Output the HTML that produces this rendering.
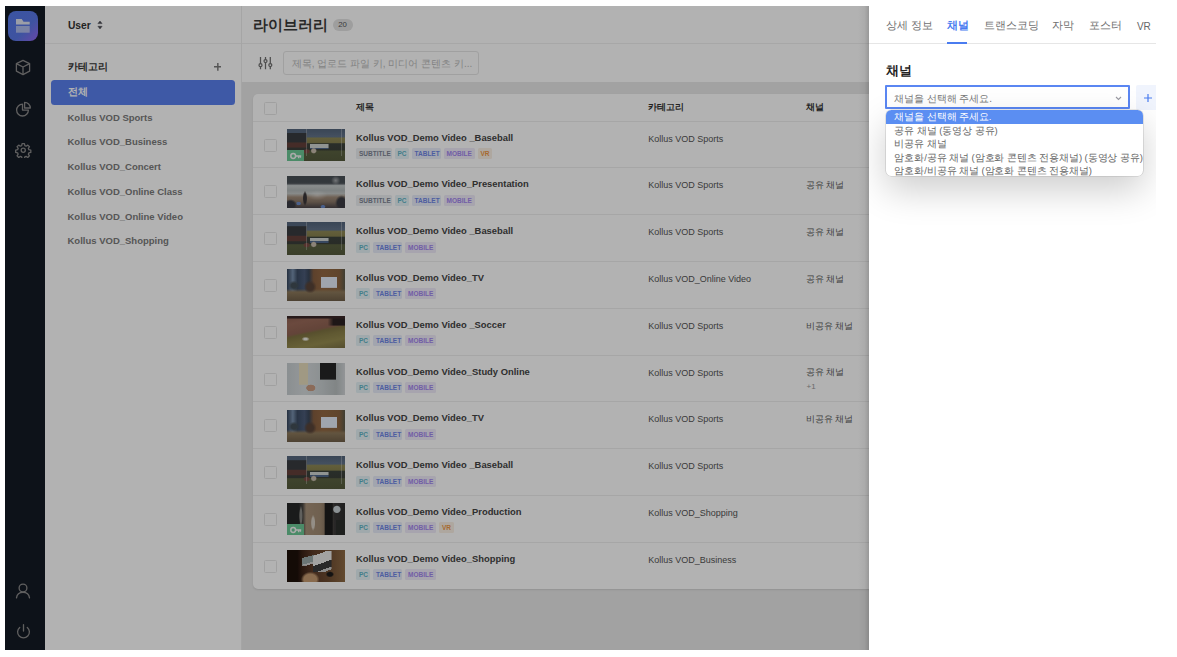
<!DOCTYPE html>
<html><head><meta charset="utf-8">
<style>
*{box-sizing:border-box;margin:0;padding:0}
html,body{width:1177px;height:657px;overflow:hidden;background:#fff;font-family:"Liberation Sans",sans-serif;position:relative}
.a{position:absolute;white-space:nowrap}
#side{position:absolute;left:5px;top:6px;width:40px;height:644px;background:#141a24}
#logo{position:absolute;left:3px;top:4.6px;width:30px;height:30.5px;border-radius:8px;background:linear-gradient(135deg,#5479e8 0%,#5a78e6 60%,#9466f0 100%)}
.ico{position:absolute}
#cat{position:absolute;left:45px;top:6px;width:197px;height:644px;background:#fff;border-right:1px solid #ececec}
#mainhd{position:absolute;left:242px;top:6px;width:700px;height:37.5px;background:#fff;border-bottom:1px solid #efefef}
#search{position:absolute;left:242px;top:44.5px;width:700px;height:37.5px;background:#fff}
#gray{position:absolute;left:242px;top:82px;width:700px;height:568px;background:#e8e8e8}
#card{position:absolute;left:253px;top:93.7px;width:700px;height:495px;background:#fff;border-radius:5px;box-shadow:0 1px 2px rgba(0,0,0,.1)}
.row{position:absolute;left:253px;width:700px;height:46.8px}
.cb{position:absolute;left:10.6px;width:13px;height:13px;border:1px solid #e6e6e6;border-radius:1.5px;background:#fff}
.th{position:absolute;left:34px;top:7.2px;width:58px;height:32.3px;overflow:hidden}
.key{position:absolute;left:0;bottom:0;width:17px;height:11px;background:#6cc895;display:flex;align-items:center;justify-content:center}
.ttl{position:absolute;left:103px;top:9px;font-size:9.4px;font-weight:700;color:#444;white-space:nowrap;line-height:14px}
.tags{position:absolute;left:103px;top:26.4px;height:11px;display:flex;gap:3px;white-space:nowrap}
.tg{display:inline-block;height:11px;line-height:11px;padding:0 3px;font-size:6.5px;font-weight:700;border-radius:1.5px}
.tg.SUBTITLE{background:#eceff3;color:#7d8493;width:35.5px}
.tg.PC{background:#e6f3f6;color:#5fb4c6;width:14px}
.tg.TABLET{background:#e9edfa;color:#6f86e6;width:29px}
.tg.MOBILE{background:#efebfa;color:#a386ee;width:31px}
.tg.VR{background:#faefe4;color:#ee9846;width:14.7px}
.ccat{position:absolute;left:395.2px;top:11px;font-size:9px;color:#555;line-height:13px;white-space:nowrap}
.cch{position:absolute;left:552.6px;top:9.8px;font-size:8.8px;color:#555;line-height:14px;white-space:nowrap}
#overlay{position:absolute;left:5px;top:6px;width:864px;height:644px;background:rgba(0,0,0,0.3)}
#panel{position:absolute;left:869px;top:0;width:287px;height:657px;background:#fff;overflow:hidden}
#pshadow{position:absolute;left:858px;top:6px;width:11px;height:644px;background:linear-gradient(90deg,rgba(0,0,0,0) 0%,rgba(0,0,0,.04) 60%,rgba(0,0,0,.15) 100%)}
.tab{position:absolute;top:18.2px;font-size:11px;color:#707070;line-height:14px;white-space:nowrap}
#dd{position:absolute;left:17px;top:110.3px;width:256.8px;height:66.1px;background:#fff;border-radius:5.5px;box-shadow:0 0 0 0.6px rgba(0,0,0,0.16),0 14px 36px rgba(0,0,0,0.2);overflow:hidden}
.opt{position:absolute;left:0;width:100%;height:13.5px;line-height:13.5px;padding-left:8.4px;font-size:9.5px;letter-spacing:-0.08px;color:#666;white-space:nowrap}
.th.baseball{background:
 linear-gradient(90deg,transparent 0 33%,rgba(235,235,235,.3) 33% 35%,transparent 35% 93%,rgba(235,235,235,.3) 93% 95%,transparent 95%) 0 0/100% 85% no-repeat,
 radial-gradient(ellipse 8% 10% at 34% 70%,#7a4a42 50%,transparent 80%),
 radial-gradient(ellipse 7% 12% at 46% 68%,#c8bcac 50%,transparent 80%),
 linear-gradient(180deg,transparent 0 47%,#cfd4d2 47% 58%,#50688a 58% 63%,transparent 63%) 58% 0/32% 100% no-repeat,
 linear-gradient(180deg,#56687f 0 12%,#383c40 14% 40%,#64403a 44% 56%,#3a3e3a 60% 68%,transparent 68%) 0 0/34% 100% no-repeat,
 linear-gradient(180deg,#53647a 0%,#62738a 24%,#8e8854 29%,#86814f 43%,#3c423c 46%,#3a3f39 65%,#5a6140 69%,#545a3c 100%)}
.th.pres{background:
 radial-gradient(ellipse 10% 18% at 84% 14%,rgba(255,255,255,.5),transparent 80%),
 radial-gradient(ellipse 14% 22% at 6% 90%,#3a3c44 50%,transparent 80%),
 radial-gradient(ellipse 14% 30% at 94% 84%,#3c3c42 50%,transparent 80%),
 radial-gradient(ellipse 5% 30% at 31% 70%,#3a3638 50%,transparent 80%),
 radial-gradient(ellipse 6% 8% at 62% 96%,#6a8ac8 50%,transparent 80%),
 radial-gradient(ellipse 6% 8% at 20% 86%,#6a8ac8 50%,transparent 80%),
 radial-gradient(ellipse 22% 20% at 52% 60%,rgba(255,255,255,.35),transparent 80%),
 linear-gradient(180deg,#4a5157 0 20%,#5a6066 24%,#c6cccc 30%,#b4baba 45%,#c2c6c4 55%,#a08c7a 66%,#8a7868 80%,#4a4448 100%)}
.th.tv{background:
 linear-gradient(90deg,transparent 0 58%,#e6ecf8 58% 86%,transparent 86%) 0 36%/100% 34% no-repeat,
 radial-gradient(ellipse 6% 11% at 66% 42%,#3e5ea0 50%,transparent 80%),
 radial-gradient(ellipse 5% 9% at 77% 40%,#3a4a6a 50%,transparent 80%),
 radial-gradient(ellipse 14% 26% at 40% 56%,#5a4438 40%,transparent 80%),
 radial-gradient(ellipse 12% 20% at 12% 52%,#445058 40%,transparent 80%),
 linear-gradient(180deg,transparent 0 62%,#8e7a5c 72%,#6e5e48 100%),
 linear-gradient(90deg,#34445a 0%,#7890ad 10%,#3c4c64 18%,#4c5c78 30%,#3a4658 38%,#865e40 46%,#946842 62%,#8a6440 90%,#5a5848 100%)}
.th.soccer{background:
 radial-gradient(ellipse 9% 9% at 32% 72%,rgba(255,255,255,.85) 30%,transparent 80%),
 linear-gradient(180deg,#3a2828 0 6%,transparent 10%),
 linear-gradient(90deg,transparent 0 70%,#2c2222 80%) 0 0/100% 30% no-repeat,
 linear-gradient(168deg,#8a5e50 0%,#9a6a5a 20%,#8e6252 44%,#7e7242 50%,#8a8048 62%,#968c50 78%,#7a7044 100%)}
.th.study{background:
 linear-gradient(90deg,transparent 0 57%,#262626 57% 84%,transparent 84%) 0 0/100% 52% no-repeat,
 radial-gradient(ellipse 12% 16% at 41% 78%,#c89a80 60%,transparent 70%),
 linear-gradient(90deg,transparent 0 20%,#e6dcbc 20% 37%,transparent 37%) 0 0/100% 68% no-repeat,
 linear-gradient(90deg,#c7cdd0 0%,#d5dadc 30%,#c9cfd1 60%,#b9bfc0 85%,#d2d6d8 100%)}
.th.prod{background:
 radial-gradient(ellipse 9% 16% at 86% 20%,#c8d0d4 60%,transparent 80%),
 linear-gradient(90deg,transparent 0 64%,#1e1e1e 66% 78%,transparent 80%),
 radial-gradient(ellipse 5% 32% at 45% 62%,#d4ccc0 50%,transparent 80%),
 radial-gradient(ellipse 4% 40% at 24% 40%,#8a8a86 50%,transparent 80%),
 linear-gradient(180deg,transparent 0 52%,#2c2e2c 52%) 100% 0/16% 100% no-repeat,
 linear-gradient(90deg,#262828 0 20%,#4a4844 27%,#a8927a 33%,#a08a72 58%,#927e68 64%,#3a3838 82%,#2e2e2e 100%)}
.th.shop{background:
 linear-gradient(160deg,transparent 0 18%,#e8e8e8 18% 55%,#3a3a3c 55% 80%,#c8c8c8 80% 90%,transparent 90%) 66% 12%/32% 66% no-repeat,
 linear-gradient(165deg,transparent 0 22%,#9aa8a8 22% 68%,#d0d0d0 68% 82%,transparent 82%) 33% 22%/22% 34% no-repeat,
 radial-gradient(ellipse 20% 30% at 40% 92%,#c49a70 55%,transparent 80%),
 radial-gradient(ellipse 9% 12% at 74% 76%,#1c1a1a 50%,transparent 80%),
 linear-gradient(90deg,#1e100a 0 18%,#3a2216 26%,#5e3c2a 45%,#6e4c32 70%,#8e6a44 100%)}

</style></head>
<body>
<div id="side">
  <div id="logo">
    <svg class="ico" style="left:8.3px;top:8.6px" width="14" height="14" viewBox="0 0 14 14">
      <path d="M0 0H5.7L7.5 2.7H13.7V5.5H0Z" fill="#e7e9f0" opacity="0.95"/>
      <rect x="0" y="7" width="13.7" height="6.7" fill="#e7e9f0" opacity="0.6"/>
    </svg>
  </div>
  <svg class="ico" style="left:10px;top:53px" width="16" height="17" viewBox="0 0 16 17" fill="none" stroke="#8a8a8a" stroke-width="1.3" stroke-linejoin="round">
    <path d="M8 1.3L14.6 4.6V12.2L8 15.6L1.4 12.2V4.6Z"/><path d="M1.4 4.6L8 8L14.6 4.6M8 8V15.6"/>
  </svg>
  <svg class="ico" style="left:10px;top:94px" width="17" height="18" viewBox="15 100 17 18" fill="none" stroke="#8a8a8a" stroke-width="1.3" stroke-linejoin="round">
    <path d="M22.5 104.2A5.9 5.9 0 1 0 28.4 110.1H22.5Z"/><path d="M24.6 102.3V108H30.3A5.7 5.7 0 0 0 24.6 102.3Z"/>
  </svg>
  <svg class="ico" style="left:10.3px;top:135.8px" width="16.5" height="16.5" viewBox="0 0 24 24" fill="none" stroke="#8a8a8a" stroke-width="1.9" stroke-linejoin="round">
    <circle cx="12" cy="12" r="3"/><path d="M10.3 2.5h3.4l.6 2.8 1.9.8 2.4-1.6 2.4 2.4-1.6 2.4.8 1.9 2.8.6v3.4l-2.8.6-.8 1.9 1.6 2.4-2.4 2.4-2.4-1.6-1.9.8-.6 2.8h-3.4l-.6-2.8-1.9-.8-2.4 1.6-2.4-2.4 1.6-2.4-.8-1.9-2.8-.6v-3.4l2.8-.6.8-1.9-1.6-2.4 2.4-2.4 2.4 1.6 1.9-.8z"/>
  </svg>
  <svg class="ico" style="left:10.15px;top:577px" width="16" height="17" viewBox="0 0 16 17" fill="none" stroke="#8a8a8a" stroke-width="1.3" stroke-linecap="round">
    <circle cx="8" cy="5" r="3.9"/><path d="M1.5 14.8C2 11.2 4.8 9.4 8 9.4S14 11.2 14.5 14.8"/>
  </svg>
  <svg class="ico" style="left:10.85px;top:618.2px" width="15" height="16" viewBox="0 0 15 16" fill="none" stroke="#8a8a8a" stroke-width="1.3" stroke-linecap="round">
    <path d="M3.71 3.48A5.9 5.9 0 1 0 11.29 3.48"/><path d="M7.5 0.75V7"/>
  </svg>
</div>
<div id="cat">
  <div class="a" style="left:0;top:0;width:196px;height:38px;border-bottom:1px solid #efefef"></div>
  <div class="a" style="left:22.9px;top:12px;font-size:10.3px;font-weight:700;color:#333;line-height:16px">User</div>
  <svg class="ico" style="left:51.5px;top:14px" width="6" height="10" viewBox="0 0 6 10" fill="#4a4a52" stroke="#4a4a52" stroke-width="0.5" stroke-linejoin="round"><path d="M0.9 3.6L3 1L5.1 3.6Z"/><path d="M0.9 6.3L3 8.9L5.1 6.3Z"/></svg>
  <div class="a" style="left:22.9px;top:53.6px;font-size:9.9px;font-weight:700;color:#333;line-height:14px">카테고리</div>
  <svg class="ico" style="left:168.7px;top:57.2px" width="7.7" height="7.7" viewBox="0 0 9 9" stroke="#7a7a7a" stroke-width="1.7"><path d="M4.5 0V9M0 4.5H9"/></svg>
  <div class="a" style="left:6px;top:73.5px;width:184.3px;height:25px;background:#5a80ee;border-radius:3.5px"></div>
  <div class="a" style="left:22.6px;top:78.6px;font-size:9.9px;font-weight:700;color:#fff;line-height:14px">전체</div>
  <div class="a" style="left:22.5px;top:104.5px;font-size:9.5px;font-weight:700;color:#7b7b7b;line-height:14px">Kollus VOD Sports</div>
  <div class="a" style="left:22.5px;top:129.4px;font-size:9.5px;font-weight:700;color:#7b7b7b;line-height:14px">Kollus VOD_Business</div>
  <div class="a" style="left:22.5px;top:154.2px;font-size:9.5px;font-weight:700;color:#7b7b7b;line-height:14px">Kollus VOD_Concert</div>
  <div class="a" style="left:22.5px;top:179px;font-size:9.5px;font-weight:700;color:#7b7b7b;line-height:14px">Kollus VOD_Online Class</div>
  <div class="a" style="left:22.5px;top:203.8px;font-size:9.5px;font-weight:700;color:#7b7b7b;line-height:14px">Kollus VOD_Online Video</div>
  <div class="a" style="left:22.5px;top:228.4px;font-size:9.5px;font-weight:700;color:#7b7b7b;line-height:14px">Kollus VOD_Shopping</div>
</div>
<div id="mainhd">
  <div class="a" style="left:11px;top:10px;font-size:14.5px;font-weight:700;color:#3a3a3a;line-height:18px">라이브러리</div>
  <div class="a" style="left:90.5px;top:13px;width:20px;height:12.2px;border-radius:6px;background:#e2e2e2;font-size:7.8px;color:#555;line-height:12.2px;text-align:center">20</div>
</div>
<div id="search">
  <svg class="ico" style="left:16px;top:11.5px" width="15" height="14" viewBox="0 0 15 14" fill="none" stroke="#707070" stroke-width="1.25">
    <path d="M2.5 1V13.3M7.5 1V13.3M12.3 1V13.3"/><circle cx="2.5" cy="9.2" r="1.5" fill="#fff"/><circle cx="7.5" cy="5" r="1.5" fill="#fff"/><circle cx="12.3" cy="9.1" r="1.5" fill="#fff"/>
  </svg>
  <div class="a" style="left:41px;top:6.5px;width:195.7px;height:24px;border:1px solid #e6e6e6;border-radius:3px"></div>
  <div class="a" style="left:49.7px;top:12.8px;font-size:10px;color:#bbb;line-height:13px">제목, 업로드 파일 키, 미디어 콘텐츠 키...</div>
</div>
<div id="gray"></div>
<div id="card">
  <div class="cb" style="top:8.3px"></div>
  <div class="a" style="left:103px;top:7px;font-size:9px;font-weight:700;color:#333;line-height:13px">제목</div>
  <div class="a" style="left:395.2px;top:7px;font-size:9px;font-weight:700;color:#333;line-height:13px">카테고리</div>
  <div class="a" style="left:552.6px;top:7px;font-size:9px;font-weight:700;color:#333;line-height:13px">채널</div>
  <div class="a" style="left:0;top:27.6px;width:700px;height:1px;background:#eeeeee"></div>
</div>
<div class="row" style="top:121.6px;border-bottom:1px solid #eeeeee;">
  <div class="cb" style="top:17px"></div>
  <div class="th baseball"><div class="key"><svg width="12" height="8" viewBox="0 0 12 8"><circle cx="3.2" cy="4" r="2.4" fill="none" stroke="#f4f4f4" stroke-width="1.5"/><path d="M5.6 4H11.2M8.6 4V6.2M10.4 4V5.8" stroke="#f4f4f4" stroke-width="1.4" fill="none"/></svg></div></div>
  <div class="ttl">Kollus VOD_Demo Video _Baseball</div>
  <div class="tags"><span class="tg SUBTITLE">SUBTITLE</span><span class="tg PC">PC</span><span class="tg TABLET">TABLET</span><span class="tg MOBILE">MOBILE</span><span class="tg VR">VR</span></div>
  <div class="ccat">Kollus VOD Sports</div>
  <div class="cch"></div>
</div>
<div class="row" style="top:168.4px;border-bottom:1px solid #eeeeee;">
  <div class="cb" style="top:17px"></div>
  <div class="th pres"></div>
  <div class="ttl">Kollus VOD_Demo Video_Presentation</div>
  <div class="tags"><span class="tg SUBTITLE">SUBTITLE</span><span class="tg PC">PC</span><span class="tg TABLET">TABLET</span><span class="tg MOBILE">MOBILE</span></div>
  <div class="ccat">Kollus VOD Sports</div>
  <div class="cch">공유 채널</div>
</div>
<div class="row" style="top:215.2px;border-bottom:1px solid #eeeeee;">
  <div class="cb" style="top:17px"></div>
  <div class="th baseball"></div>
  <div class="ttl">Kollus VOD_Demo Video _Baseball</div>
  <div class="tags"><span class="tg PC">PC</span><span class="tg TABLET">TABLET</span><span class="tg MOBILE">MOBILE</span></div>
  <div class="ccat">Kollus VOD Sports</div>
  <div class="cch">공유 채널</div>
</div>
<div class="row" style="top:262.0px;border-bottom:1px solid #eeeeee;">
  <div class="cb" style="top:17px"></div>
  <div class="th tv"></div>
  <div class="ttl">Kollus VOD_Demo Video_TV</div>
  <div class="tags"><span class="tg PC">PC</span><span class="tg TABLET">TABLET</span><span class="tg MOBILE">MOBILE</span></div>
  <div class="ccat">Kollus VOD_Online Video</div>
  <div class="cch">공유 채널</div>
</div>
<div class="row" style="top:308.8px;border-bottom:1px solid #eeeeee;">
  <div class="cb" style="top:17px"></div>
  <div class="th soccer"></div>
  <div class="ttl">Kollus VOD_Demo Video _Soccer</div>
  <div class="tags"><span class="tg PC">PC</span><span class="tg TABLET">TABLET</span><span class="tg MOBILE">MOBILE</span></div>
  <div class="ccat">Kollus VOD Sports</div>
  <div class="cch">비공유 채널</div>
</div>
<div class="row" style="top:355.6px;border-bottom:1px solid #eeeeee;">
  <div class="cb" style="top:17px"></div>
  <div class="th study"></div>
  <div class="ttl">Kollus VOD_Demo Video_Study Online</div>
  <div class="tags"><span class="tg PC">PC</span><span class="tg TABLET">TABLET</span><span class="tg MOBILE">MOBILE</span></div>
  <div class="ccat">Kollus VOD Sports</div>
  <div class="cch">공유 채널<br><span style='font-size:8px;color:#999;padding-left:1px'>+1</span></div>
</div>
<div class="row" style="top:402.4px;border-bottom:1px solid #eeeeee;">
  <div class="cb" style="top:17px"></div>
  <div class="th tv"></div>
  <div class="ttl">Kollus VOD_Demo Video_TV</div>
  <div class="tags"><span class="tg PC">PC</span><span class="tg TABLET">TABLET</span><span class="tg MOBILE">MOBILE</span></div>
  <div class="ccat">Kollus VOD Sports</div>
  <div class="cch">비공유 채널</div>
</div>
<div class="row" style="top:449.2px;border-bottom:1px solid #eeeeee;">
  <div class="cb" style="top:17px"></div>
  <div class="th baseball"></div>
  <div class="ttl">Kollus VOD_Demo Video _Baseball</div>
  <div class="tags"><span class="tg PC">PC</span><span class="tg TABLET">TABLET</span><span class="tg MOBILE">MOBILE</span></div>
  <div class="ccat">Kollus VOD Sports</div>
  <div class="cch"></div>
</div>
<div class="row" style="top:496.0px;border-bottom:1px solid #eeeeee;">
  <div class="cb" style="top:17px"></div>
  <div class="th prod"><div class="key"><svg width="12" height="8" viewBox="0 0 12 8"><circle cx="3.2" cy="4" r="2.4" fill="none" stroke="#f4f4f4" stroke-width="1.5"/><path d="M5.6 4H11.2M8.6 4V6.2M10.4 4V5.8" stroke="#f4f4f4" stroke-width="1.4" fill="none"/></svg></div></div>
  <div class="ttl">Kollus VOD_Demo Video_Production</div>
  <div class="tags"><span class="tg PC">PC</span><span class="tg TABLET">TABLET</span><span class="tg MOBILE">MOBILE</span><span class="tg VR">VR</span></div>
  <div class="ccat">Kollus VOD_Shopping</div>
  <div class="cch"></div>
</div>
<div class="row" style="top:542.8px;">
  <div class="cb" style="top:17px"></div>
  <div class="th shop"></div>
  <div class="ttl">Kollus VOD_Demo Video_Shopping</div>
  <div class="tags"><span class="tg PC">PC</span><span class="tg TABLET">TABLET</span><span class="tg MOBILE">MOBILE</span></div>
  <div class="ccat">Kollus VOD_Business</div>
  <div class="cch"></div>
</div>
<div id="overlay"></div>
<div id="pshadow"></div>
<div id="panel">
  <div class="tab" style="left:16.6px">상세 정보</div>
  <div class="tab" style="left:77.8px;color:#4a7cf0;font-weight:700">채널</div>
  <div class="tab" style="left:115.4px">트랜스코딩</div>
  <div class="tab" style="left:183.2px">자막</div>
  <div class="tab" style="left:220px">포스터</div>
  <div class="tab" style="left:267.9px;top:20.3px;font-size:10px;color:#666">VR</div>
  <div class="a" style="left:0;top:43px;width:287.5px;height:1px;background:#e6e6e6"></div>
  <div class="a" style="left:77.8px;top:41.5px;width:20.6px;height:2px;background:#4a7cf0"></div>
  <div class="a" style="left:16.6px;top:62px;font-size:12.8px;font-weight:700;color:#222;line-height:18px">채널</div>
  <div class="a" style="left:16.2px;top:85px;width:245px;height:24px;border:2px solid #5a86f2;border-radius:1px;background:#fff"></div>
  <div class="a" style="left:24.8px;top:92px;font-size:10px;color:#777;line-height:13px">채널을 선택해 주세요.</div>
  <svg class="ico" style="left:246px;top:95.5px" width="7" height="5" viewBox="0 0 7 5" fill="none" stroke="#9a9aa2" stroke-width="1.1"><path d="M1 1L3.5 3.5L6 1"/></svg>
  <div class="a" style="left:267px;top:85px;width:30px;height:24.5px;background:#f0f4fd;border-radius:2px"></div>
  <svg class="ico" style="left:274.8px;top:93.6px" width="8" height="8" viewBox="0 0 10 10" stroke="#4a7cf0" stroke-width="1.5"><path d="M5 0V10M0 5H10"/></svg>
  <div id="dd">
    <div class="opt" style="top:0;background:#5b8ef2;color:#fff">채널을 선택해 주세요.</div>
    <div class="opt" style="top:13.6px">공유 채널 (동영상 공유)</div>
    <div class="opt" style="top:27.1px">비공유 채널</div>
    <div class="opt" style="top:40.7px">암호화/공유 채널 (암호화 콘텐츠 전용채널) (동영상 공유)</div>
    <div class="opt" style="top:54.2px">암호화/비공유 채널 (암호화 콘텐츠 전용채널)</div>
  </div>
</div>

</body></html>
